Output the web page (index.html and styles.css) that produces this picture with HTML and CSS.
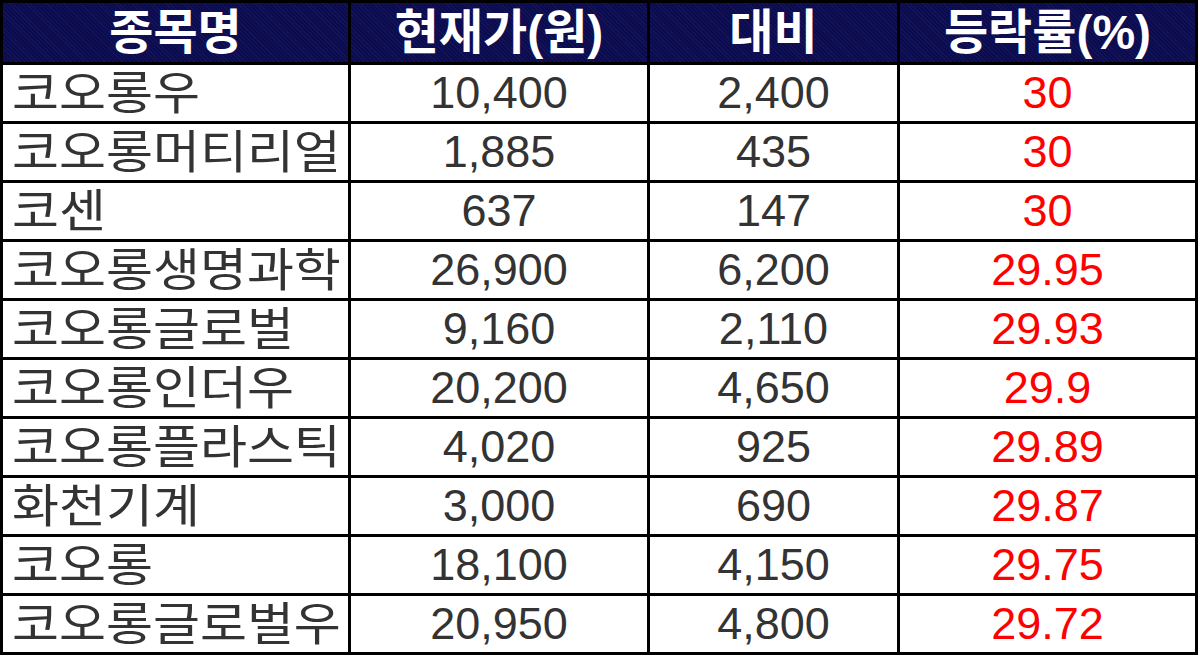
FILE: index.html
```html
<!DOCTYPE html>
<html lang="ko">
<head>
<meta charset="utf-8">
<title>등락률 상위 종목</title>
<link rel="stylesheet" href="styles.css">
</head>
<body>
<table class="stocks">
  <colgroup>
    <col class="c-name">
    <col class="c-price">
    <col class="c-diff">
    <col class="c-rate">
  </colgroup>
  <thead>
    <tr>
      <th>종목명</th>
      <th>현재가(원)</th>
      <th>대비</th>
      <th>등락률(%)</th>
    </tr>
  </thead>
  <tbody>
    <tr><td class="name"><span>코오롱우</span></td><td>10,400</td><td>2,400</td><td class="rate">30</td></tr>
    <tr><td class="name"><span>코오롱머티리얼</span></td><td>1,885</td><td>435</td><td class="rate">30</td></tr>
    <tr><td class="name"><span>코센</span></td><td>637</td><td>147</td><td class="rate">30</td></tr>
    <tr><td class="name"><span>코오롱생명과학</span></td><td>26,900</td><td>6,200</td><td class="rate">29.95</td></tr>
    <tr><td class="name"><span>코오롱글로벌</span></td><td>9,160</td><td>2,110</td><td class="rate">29.93</td></tr>
    <tr><td class="name"><span>코오롱인더우</span></td><td>20,200</td><td>4,650</td><td class="rate">29.9</td></tr>
    <tr><td class="name"><span>코오롱플라스틱</span></td><td>4,020</td><td>925</td><td class="rate">29.89</td></tr>
    <tr><td class="name"><span>화천기계</span></td><td>3,000</td><td>690</td><td class="rate">29.87</td></tr>
    <tr><td class="name"><span>코오롱</span></td><td>18,100</td><td>4,150</td><td class="rate">29.75</td></tr>
    <tr><td class="name"><span>코오롱글로벌우</span></td><td>20,950</td><td>4,800</td><td class="rate">29.72</td></tr>
  </tbody>
</table>
</body>
</html>
```

FILE: styles.css
```css
html, body {
  margin: 0;
  padding: 0;
  background: #ffffff;
}

.stocks {
  table-layout: fixed;
  width: 1198px;
  border-collapse: separate;
  border-spacing: 3px;
  background: #000000;
  font-family: "Liberation Sans", "Noto Sans CJK KR", sans-serif;
}

.c-name { width: 345px; }
.c-price { width: 296px; }
.c-diff { width: 247px; }
.c-rate { width: 295px; }

.stocks th {
  height: 59px;
  padding: 0;
  background-color: #0b0b50;
  background-image: repeating-linear-gradient(45deg, rgba(255,255,255,0.035) 0 1px, rgba(0,0,0,0) 1px 3px);
  color: #ffffff;
  font-weight: 700;
  font-size: 48px;
  line-height: 59px;
  text-align: center;
  white-space: nowrap;
}

.stocks td {
  height: 56px;
  padding: 0;
  background: #ffffff;
  color: #333333;
  font-size: 45px;
  line-height: 56px;
  text-align: center;
  white-space: nowrap;
}

.stocks td.name {
  text-align: left;
  padding-left: 9px;
  font-size: 46px;
}

.stocks td.name span {
  display: inline-block;
  transform: scaleX(1.11);
  transform-origin: left center;
}

.stocks td.rate {
  color: #ff0000;
}
```
